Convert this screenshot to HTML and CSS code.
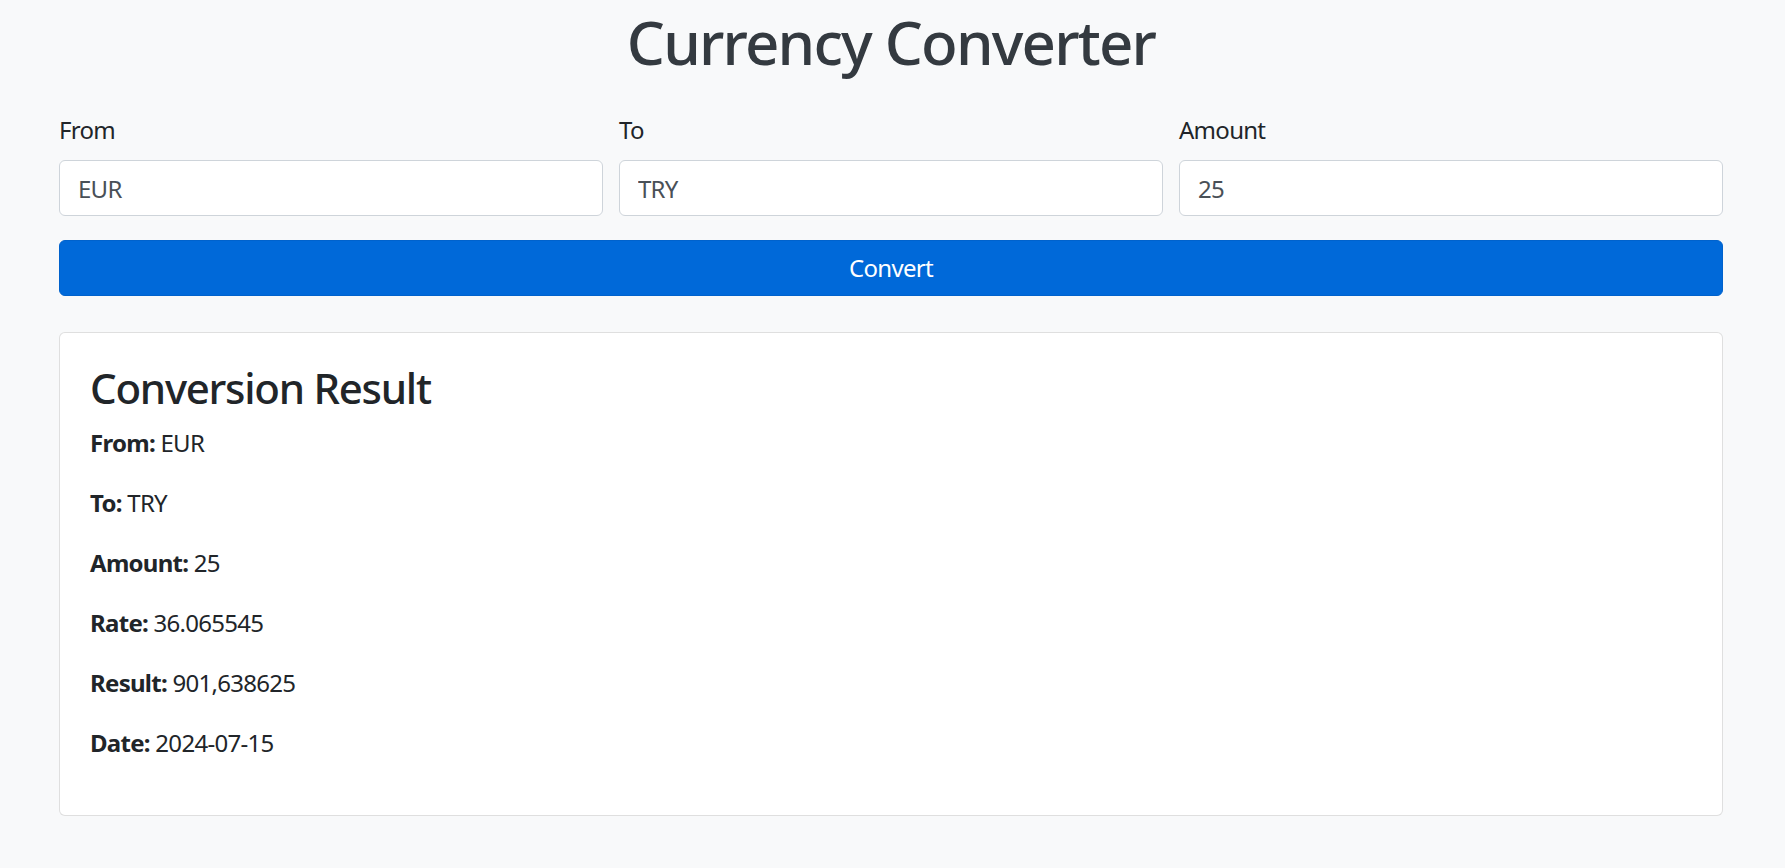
FILE: index.html
```html
<!DOCTYPE html>
<html lang="en">
<head>
    <meta charset="UTF-8">
    <meta name="viewport" content="width=device-width, initial-scale=1.0">
    <title>Currency Converter</title>
    <link rel="stylesheet" href="styles.css">
</head>
<body>
    <div class="container">
        <h1 class="title">Currency Converter</h1>
        <form class="converter">
            <div class="fields">
                <div class="field">
                    <label for="from">From</label>
                    <input id="from" type="text" value="EUR">
                </div>
                <div class="field">
                    <label for="to">To</label>
                    <input id="to" type="text" value="TRY">
                </div>
                <div class="field">
                    <label for="amount">Amount</label>
                    <input id="amount" type="text" value="25">
                </div>
            </div>
            <button type="button" class="convert-btn">Convert</button>
        </form>
        <div class="result-card">
            <h3>Conversion Result</h3>
            <p><strong>From:</strong> EUR</p>
            <p><strong>To:</strong> TRY</p>
            <p><strong>Amount:</strong> 25</p>
            <p><strong>Rate:</strong> 36.065545</p>
            <p><strong>Result:</strong> 901,638625</p>
            <p><strong>Date:</strong> 2024-07-15</p>
        </div>
    </div>
</body>
</html>
```

FILE: styles.css
```css
* {
    box-sizing: border-box;
}
body {
    margin: 0;
    background-color: #f8f9fa;
    color: #212529;
    font-family: "Noto Sans", "Open Sans", sans-serif;
    font-size: 24px;
    line-height: 36px;
    letter-spacing: -0.03em;
}
.container {
    width: 1664px;
    margin-left: 59px;
    padding-top: 6px;
}
h1.title {
    margin: 0 0 34px;
    font-size: 60px;
    font-weight: 500;
    line-height: 72px;
    letter-spacing: -0.03em;
    text-align: center;
    color: #343a40;
}
.fields {
    display: grid;
    grid-template-columns: repeat(3, 1fr);
    gap: 16px;
}
.field label {
    display: block;
    margin-bottom: 12px;
}
.field input {
    display: block;
    width: 100%;
    height: 56px;
    padding: 9px 18px;
    border: 1px solid #ced4da;
    border-radius: 6px;
    background: #fff;
    color: #495057;
    font: inherit;
    letter-spacing: inherit;
}
.convert-btn {
    display: block;
    width: 100%;
    height: 56px;
    margin-top: 24px;
    border: 1px solid #0062cc;
    border-radius: 6px;
    background-color: #0069d9;
    color: #fff;
    font: inherit;
    letter-spacing: inherit;
}
.result-card {
    margin-top: 36px;
    padding: 30px;
    background: #fff;
    border: 1px solid rgba(0, 0, 0, 0.125);
    border-radius: 6px;
}
.result-card h3 {
    margin: 0 0 12px;
    font-size: 42px;
    font-weight: 500;
    line-height: 50px;
    letter-spacing: -0.03em;
}
.result-card p {
    margin: 0 0 24px;
}
.result-card strong {
    font-weight: 700;
}
```
